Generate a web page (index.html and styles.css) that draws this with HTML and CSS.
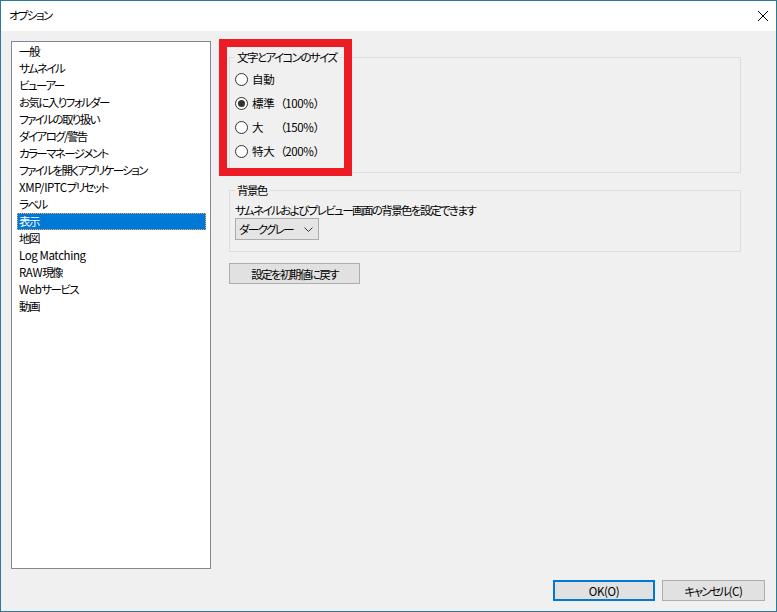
FILE: index.html
```html
<!DOCTYPE html>
<html lang="ja">
<head>
<meta charset="utf-8">
<title>オプション</title>
<link rel="stylesheet" href="styles.css">
</head>
<body>
<div class="window">
  <div class="titlebar">
    <span class="title">オプション</span>
    <svg class="close" width="12" height="12" viewBox="0 0 12 12"><path d="M1 1 L11 11 M11 1 L1 11" stroke="#000" stroke-width="1" fill="none"/></svg>
  </div>
  <div class="body">
    <ul class="list">
      <li class="item">一般</li>
      <li class="item">サムネイル</li>
      <li class="item">ビューアー</li>
      <li class="item">お気に入りフォルダー</li>
      <li class="item">ファイルの取り扱い</li>
      <li class="item">ダイアログ/警告</li>
      <li class="item">カラーマネージメント</li>
      <li class="item">ファイルを開くアプリケーション</li>
      <li class="item"><span class="lt">XMP/IPTC</span>プリセット</li>
      <li class="item">ラベル</li>
      <li class="item selected">表示</li>
      <li class="item">地図</li>
      <li class="item"><span class="lt">Log Matching</span></li>
      <li class="item"><span class="lt">RAW</span>現像</li>
      <li class="item"><span class="lt">Web</span>サービス</li>
      <li class="item">動画</li>
    </ul>
    <div class="panel">
      <fieldset class="group group-size">
        <legend>文字とアイコンのサイズ</legend>
        <div class="radio"><span class="circle"></span><span class="lbl">自動</span></div>
        <div class="radio"><span class="circle checked"></span><span class="lbl">標準</span><span class="pct">（<span class="lt">100%</span>）</span></div>
        <div class="radio"><span class="circle"></span><span class="lbl">大</span><span class="pct">（<span class="lt">150%</span>）</span></div>
        <div class="radio"><span class="circle"></span><span class="lbl">特大</span><span class="pct">（<span class="lt">200%</span>）</span></div>
      </fieldset>
      <fieldset class="group group-bg">
        <legend>背景色</legend>
        <div class="desc">サムネイルおよびプレビュー画面の背景色を設定できます</div>
        <div class="select"><span class="val">ダークグレー</span><svg class="chev" width="9" height="5" viewBox="0 0 9 5"><path d="M0.5 0.5 L4.5 4.5 L8.5 0.5" stroke="#333" stroke-width="1" fill="none"/></svg></div>
      </fieldset>
      <button class="btn reset">設定を初期値に戻す</button>
    </div>
  </div>
  <div class="footer">
    <button class="btn ok"><span class="lt">OK(O)</span></button>
    <button class="btn cancel">キャンセル<span class="lt">(C)</span></button>
  </div>
  <div class="highlight"></div>
</div>
</body>
</html>
```
FILE: styles.css
```css
* { box-sizing: border-box; }
html, body { margin: 0; padding: 0; }
body {
  font-family: "Noto Sans CJK JP", "Noto Sans", sans-serif;
  font-size: 11.5px;
  letter-spacing: -1.6px;
  font-feature-settings: "palt";
  color: #000;
  background: #fff;
}
.lt { letter-spacing: -0.4px; }
.window {
  position: relative;
  width: 777px;
  height: 612px;
  border: 1px solid #2b7a9b;
  background: #f0f0f0;
  display: flex;
  flex-direction: column;
}
.titlebar {
  height: 30px;
  background: #fff;
  display: flex;
  align-items: center;
  justify-content: space-between;
  padding: 0 9px 2px 8px;
  flex: none;
}
.title { line-height: 14px; }
.close { margin-top: 1px; margin-right: -2px; }
.body {
  display: flex;
  padding: 10px 10px 0 10px;
  flex: none;
}
.list {
  list-style: none;
  margin: 0 18px 0 0;
  padding: 1px 4px 0 5px;
  width: 200px;
  height: 528px;
  background: #fff;
  border: 1px solid #828790;
  flex: none;
}
.item {
  height: 17px;
  line-height: 15px;
  padding-left: 1px;
  border: 1px solid transparent;
  white-space: nowrap;
}
.item.selected {
  background: #0078d7;
  color: #fff;
  border: 1px dotted #f3b25a;
}
.panel {
  display: flex;
  flex-direction: column;
  align-items: flex-start;
  padding-top: 9px;
}
.group {
  width: 512px;
  margin: 0;
  border: 1px solid #dcdcdc;
  padding: 0 0 0 5px;
  min-inline-size: 0;
}
.group legend {
  padding: 0 3px 0 2px;
  line-height: 14px;
}
.group-size { padding-top: 3px; padding-bottom: 8px; height: 123px; }
.radio {
  height: 24px;
  display: flex;
  align-items: center;
  white-space: nowrap;
}
.circle {
  width: 13px;
  height: 13px;
  border: 1px solid #333;
  border-radius: 50%;
  background: #fff;
  margin-right: 4px;
  position: relative;
  flex: none;
}
.circle.checked::after {
  content: "";
  position: absolute;
  left: 2px; top: 2px;
  width: 7px; height: 7px;
  border-radius: 50%;
  background: #333;
}
.lbl { display: inline-block; width: 23px; line-height: 14px; letter-spacing: -0.3px; }
.pct { line-height: 14px; font-feature-settings: normal; letter-spacing: -1.2px; }
.group-bg { margin-top: 10px; height: 69px; padding-top: 6px; }
.desc { line-height: 14px; white-space: nowrap; }
.select {
  margin-top: 1px;
  width: 84px;
  height: 22px;
  background: #e5e5e5;
  border: 1px solid #acacac;
  display: flex;
  align-items: center;
  justify-content: space-between;
  padding: 0 5px 0 3px;
  white-space: nowrap;
}
.val { line-height: 14px; }
.chev { margin-top: 1px; flex: none; }
.btn {
  font-family: inherit;
  font-size: 11.5px;
  letter-spacing: -1.6px;
  font-feature-settings: "palt";
  background: #e1e1e1;
  border: 1px solid #adadad;
  color: #000;
  padding: 0;
  line-height: 14px;
  height: 21px;
  white-space: nowrap;
}
.reset { margin-top: 11px; width: 131px; }
.footer {
  display: flex;
  justify-content: flex-end;
  gap: 7px;
  padding: 11px 11px 0 0;
}
.ok { width: 102px; border: 2px solid #0078d7; }
.cancel { width: 103px; }
.highlight {
  position: absolute;
  left: 218px;
  top: 38px;
  width: 133px;
  height: 137px;
  border: 8px solid #ed1c24;
  pointer-events: none;
}
```
